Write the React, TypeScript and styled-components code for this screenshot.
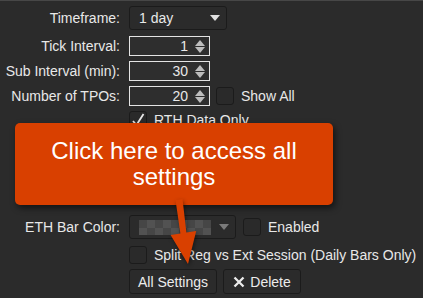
import React from "react";
import styled, { createGlobalStyle } from "styled-components";

const Global = createGlobalStyle`
  html, body { margin: 0; padding: 0; background: #2b2b2b; }
  body { font-family: "Liberation Sans", Arial, sans-serif; }
`;

const Panel = styled.div`
  position: relative;
  width: 423px;
  height: 298px;
  box-sizing: border-box;
  border-top: 1px solid #474747;
  padding-top: 5px;
  background: #2b2b2b;
  display: flex;
  flex-direction: column;
  overflow: hidden;
  font-size: 14px;
  color: #e8e8e8;
`;

const Row = styled.div<{ $mt?: number }>`
  display: grid;
  grid-template-columns: 120px 1fr;
  column-gap: 9px;
  align-items: center;
  margin-top: ${(p) => p.$mt ?? 0}px;
`;

const Label = styled.div`
  text-align: right;
  white-space: nowrap;
`;

const Controls = styled.div<{ $gap?: number }>`
  grid-column: 2;
  display: flex;
  align-items: center;
  gap: ${(p) => p.$gap ?? 6}px;
`;

const Select = styled.div<{ $w: number }>`
  width: ${(p) => p.$w}px;
  height: 24px;
  box-sizing: border-box;
  border: 1px solid #1b1b1b;
  border-radius: 3px;
  background: #2b2b2b;
  display: flex;
  align-items: center;
  padding: 0 6px 0 9px;
  gap: 8px;
`;

const SelectText = styled.span`
  flex: 1;
`;

const Caret = styled.span<{ $c: string }>`
  width: 0;
  height: 0;
  border-left: 5px solid transparent;
  border-right: 5px solid transparent;
  border-top: 6px solid ${(p) => p.$c};
`;

const Checker = styled.span`
  flex: 1;
  height: 15px;
  background-color: #4b4b4b;
  background-image: linear-gradient(45deg, #595959 25%, transparent 25%, transparent 75%, #595959 75%),
    linear-gradient(45deg, #595959 25%, transparent 25%, transparent 75%, #595959 75%);
  background-size: 16px 16px;
  background-position: 0 0, 8px 8px;
  opacity: 0.85;
`;

const NumberBox = styled.div`
  width: 81px;
  height: 20px;
  box-sizing: border-box;
  border: 1px solid #e4e4e4;
  background: #2e2e2e;
  display: flex;
  align-items: center;
  justify-content: flex-end;
  padding-right: 4px;
  gap: 7px;
`;

const Spinner = styled.span`
  display: flex;
  flex-direction: column;
  gap: 1px;
  &::before, &::after {
    content: "";
    width: 0;
    height: 0;
    border-left: 5px solid transparent;
    border-right: 5px solid transparent;
  }
  &::before { border-bottom: 6px solid #bdbdbd; }
  &::after { border-top: 6px solid #bdbdbd; }
`;

const CheckRow = styled.label`
  display: flex;
  align-items: center;
  gap: 7px;
  white-space: nowrap;
`;

const Box = styled.span`
  width: 18px;
  height: 18px;
  box-sizing: border-box;
  border: 1px solid #1b1b1b;
  border-radius: 3px;
  background: #2a2a2a;
  display: flex;
  align-items: center;
  justify-content: center;
`;

const Button = styled.button<{ $w: number }>`
  width: ${(p) => p.$w}px;
  height: 25px;
  box-sizing: border-box;
  border: 1px solid #1b1b1b;
  border-radius: 3px;
  background: #2b2b2b;
  color: #ececec;
  font: inherit;
  display: flex;
  align-items: center;
  justify-content: center;
  gap: 5px;
  padding: 0;
`;

const Callout = styled.div`
  position: absolute;
  left: 15px;
  top: 122px;
  width: 318px;
  height: 82px;
  box-sizing: border-box;
  background: #d94000;
  border-radius: 5px;
  box-shadow: 2px 3px 6px rgba(0, 0, 0, 0.55);
  color: #ffffff;
  font-size: 24px;
  line-height: 26px;
  text-align: center;
  display: flex;
  align-items: center;
  justify-content: center;
  padding: 0 20px;
`;

const Arrow = styled.svg`
  position: absolute;
  left: 0;
  top: 0;
  width: 423px;
  height: 298px;
  pointer-events: none;
  filter: drop-shadow(1px 2px 2px rgba(0, 0, 0, 0.45));
`;

const Check = () => (
  <svg width="14" height="14" viewBox="0 0 14 14">
    <path d="M2 8 L5.5 12 L12.5 1" stroke="#e8e8e8" strokeWidth="1.8" fill="none" />
  </svg>
);

const XIcon = () => (
  <svg width="12" height="12" viewBox="0 0 12 12">
    <path d="M1.5 1.5 L10.5 10.5 M10.5 1.5 L1.5 10.5" stroke="#ececec" strokeWidth="2.3" />
  </svg>
);

const NumberInput = ({ value }: { value: string }) => (
  <NumberBox>
    <span>{value}</span>
    <Spinner />
  </NumberBox>
);

const ColorPicker = () => (
  <Select $w={107}>
    <Checker />
    <Caret $c="#7a7a7a" />
  </Select>
);

export default function App() {
  return (
    <>
      <Global />
      <Panel>
        <Row>
          <Label>Timeframe:</Label>
          <Controls>
            <Select $w={98}>
              <SelectText>1 day</SelectText>
              <Caret $c="#e0e0e0" />
            </Select>
          </Controls>
        </Row>
        <Row $mt={6}>
          <Label>Tick Interval:</Label>
          <Controls>
            <NumberInput value="1" />
          </Controls>
        </Row>
        <Row $mt={5}>
          <Label>Sub Interval (min):</Label>
          <Controls>
            <NumberInput value="30" />
          </Controls>
        </Row>
        <Row $mt={5}>
          <Label>Number of TPOs:</Label>
          <Controls>
            <NumberInput value="20" />
            <CheckRow>
              <Box />
              Show All
            </CheckRow>
          </Controls>
        </Row>
        <Row $mt={5}>
          <Controls>
            <CheckRow>
              <Box>
                <Check />
              </Box>
              RTH Data Only
            </CheckRow>
          </Controls>
        </Row>
        <Row $mt={52}>
          <Controls $gap={7}>
            <ColorPicker />
          </Controls>
        </Row>
        <Row $mt={10}>
          <Label>ETH Bar Color:</Label>
          <Controls $gap={7}>
            <ColorPicker />
            <CheckRow>
              <Box />
              Enabled
            </CheckRow>
          </Controls>
        </Row>
        <Row $mt={7}>
          <Controls>
            <CheckRow>
              <Box />
              Split Reg vs Ext Session (Daily Bars Only)
            </CheckRow>
          </Controls>
        </Row>
        <Row $mt={5}>
          <Controls>
            <Button $w={88}>All Settings</Button>
            <Button $w={78}>
              <XIcon />
              Delete
            </Button>
          </Controls>
        </Row>
        <Callout>Click here to access all settings</Callout>
        <Arrow viewBox="0 0 423 298">
          <polygon
            points="175.5,199 182.5,198 186.4,231.5 196.2,230 188,263 170.6,234 180.4,232.5"
            fill="#d94000"
          />
        </Arrow>
      </Panel>
    </>
  );
}
